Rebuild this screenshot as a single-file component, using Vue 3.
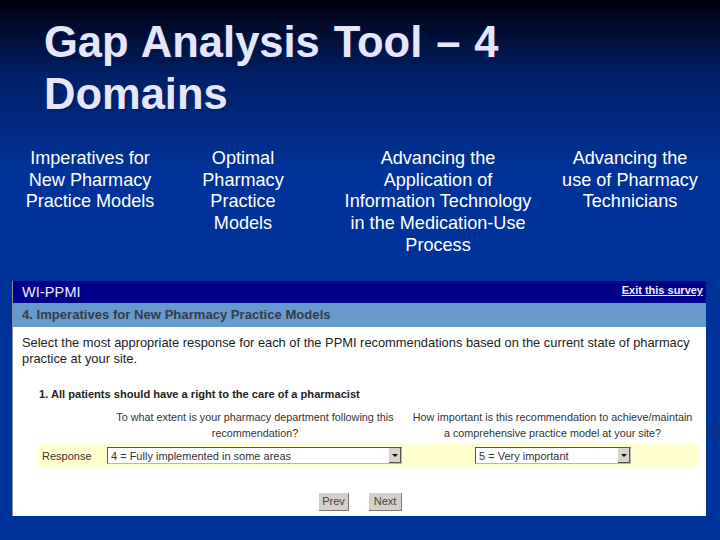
<script setup>
const columns = [
  { w: 150, lines: ['Imperatives for', 'New Pharmacy', 'Practice Models'] },
  { w: 156, lines: ['Optimal', 'Pharmacy', 'Practice', 'Models'] },
  { w: 234, lines: ['Advancing the', 'Application of', 'Information Technology', 'in the Medication-Use', 'Process'] },
  { w: 150, lines: ['Advancing the', 'use of Pharmacy', 'Technicians'] }
]
</script>

<template>
  <div class="slide">
    <h1 class="title">Gap Analysis Tool – 4<br />Domains</h1>
    <div class="cols">
      <div v-for="c in columns" :key="c.lines[0] + c.w" class="col" :style="{ width: c.w + 'px' }">
        <div v-for="l in c.lines" :key="l">{{ l }}</div>
      </div>
    </div>
    <div class="shot">
      <div class="top">
        <span class="brand">WI-PPMI</span>
        <span class="exit">Exit this survey</span>
      </div>
      <div class="band">4. Imperatives for New Pharmacy Practice Models</div>
      <div class="body">
        <p class="intro">Select the most appropriate response for each of the PPMI recommendations based on the current state of pharmacy practice at your site.</p>
        <p class="q">1. All patients should have a right to the care of a pharmacist</p>
        <div class="asks">
          <div class="ask a1">To what extent is your pharmacy department following this recommendation?</div>
          <div class="ask a2">How important is this recommendation to achieve/maintain a comprehensive practice model at your site?</div>
        </div>
        <div class="resp">
          <span class="lab">Response</span>
          <div class="sel s1"><span>4 = Fully implemented in some areas</span><i class="arrow"></i></div>
          <div class="sel s2"><span>5 = Very important</span><i class="arrow"></i></div>
        </div>
        <div class="nav">
          <span class="btn prev">Prev</span>
          <span class="btn next">Next</span>
        </div>
      </div>
    </div>
    <div class="smudge"></div>
  </div>
</template>

<style>
html, body { margin: 0; background: #003399; }
</style>

<style scoped>
.slide {
  position: relative;
  width: 720px;
  height: 540px;
  overflow: hidden;
  box-sizing: border-box;
  background: linear-gradient(180deg, #00000f 0, #002066 75px, #003399 170px);
  font-family: "Liberation Sans", Arial, sans-serif;
  display: flex;
  flex-direction: column;
}
.smudge {
  position: absolute;
  left: 706px;
  top: 420px;
  width: 14px;
  height: 22px;
  background: radial-gradient(ellipse at 70% 50%, #0a2f8a 0, rgba(0, 51, 153, 0) 70%);
}
.title {
  margin: 0;
  padding: 16px 0 0 44px;
  font-size: 43.5px;
  line-height: 52px;
  font-weight: 700;
  word-spacing: 1.8px;
  color: #e6e6fa;
  text-shadow: 1px 1px 2px #001a55;
}
.cols {
  display: flex;
  margin-top: 28px;
  padding-left: 15px;
  height: 133px;
  font-size: 18.1px;
  line-height: 21.7px;
  color: #fff;
  text-align: center;
}
.shot {
  margin-left: 12px;
  width: 694px;
  height: 235px;
  border-left: 1px solid #8a8f9c;
  box-sizing: border-box;
  background: #fff;
  display: flex;
  flex-direction: column;
}
.top {
  height: 22px;
  background: #000088;
  display: flex;
  justify-content: space-between;
  padding: 0 3px 0 9px;
  color: #eef;
}
.brand { font-size: 14.5px; line-height: 23px; letter-spacing: 0.1px; }
.exit { font-size: 11px; line-height: 19px; font-weight: 700; text-decoration: underline; }
.band {
  height: 24px;
  background: #6699cc;
  color: #333c4c;
  font-size: 13.1px;
  font-weight: 700;
  line-height: 24px;
  padding-left: 9px;
}
.body { flex: 1; position: relative; color: #222; }
.intro {
  margin: 8px 0 0 9px;
  width: 680px;
  font-size: 12.87px;
  line-height: 16px;
}
.q {
  margin: 20px 0 0 26px;
  font-size: 11.1px;
  line-height: 14px;
  font-weight: 700;
  color: #222;
}
.asks { display: flex; margin-top: 8px; }
.ask {
  font-size: 10.8px;
  line-height: 16px;
  text-align: center;
  color: #333;
}
.a1 { margin-left: 92px; width: 300px; }
.a2 { margin-left: 5px; width: 285px; }
.resp {
  margin: 3px 0 0 25px;
  width: 661px;
  height: 23px;
  background: #ffffd0;
  display: flex;
  align-items: center;
  font-size: 11px;
  color: #333;
}
.lab { width: 69px; padding-left: 4px; box-sizing: border-box; }
.sel {
  height: 17px;
  box-sizing: border-box;
  background: #fff;
  border: 1px solid #b8b8b0;
  border-top-color: #555;
  border-left-color: #555;
  display: flex;
  align-items: center;
  justify-content: space-between;
  padding-left: 3px;
  font-size: 11px;
}
.s1 { width: 295px; }
.s2 { width: 156px; margin-left: 73px; }
.arrow {
  width: 12px;
  height: 15px;
  background: #d8d4cc;
  border-right: 1px solid #555;
  border-bottom: 1px solid #555;
  box-sizing: border-box;
  position: relative;
}
.arrow::after {
  content: "";
  position: absolute;
  left: 3px;
  top: 6px;
  border: 3px solid transparent;
  border-top: 3px solid #111;
  border-bottom: 0;
}
.nav {
  display: flex;
  gap: 20px;
  margin: 26px 0 0 306px;
}
.btn {
  height: 18px;
  box-sizing: border-box;
  background: #d4d0c8;
  border-right: 1px solid #777;
  border-bottom: 1px solid #777;
  font-size: 11px;
  line-height: 17px;
  text-align: center;
  color: #444;
}
.prev { width: 30px; }
.next { width: 33px; }
</style>
